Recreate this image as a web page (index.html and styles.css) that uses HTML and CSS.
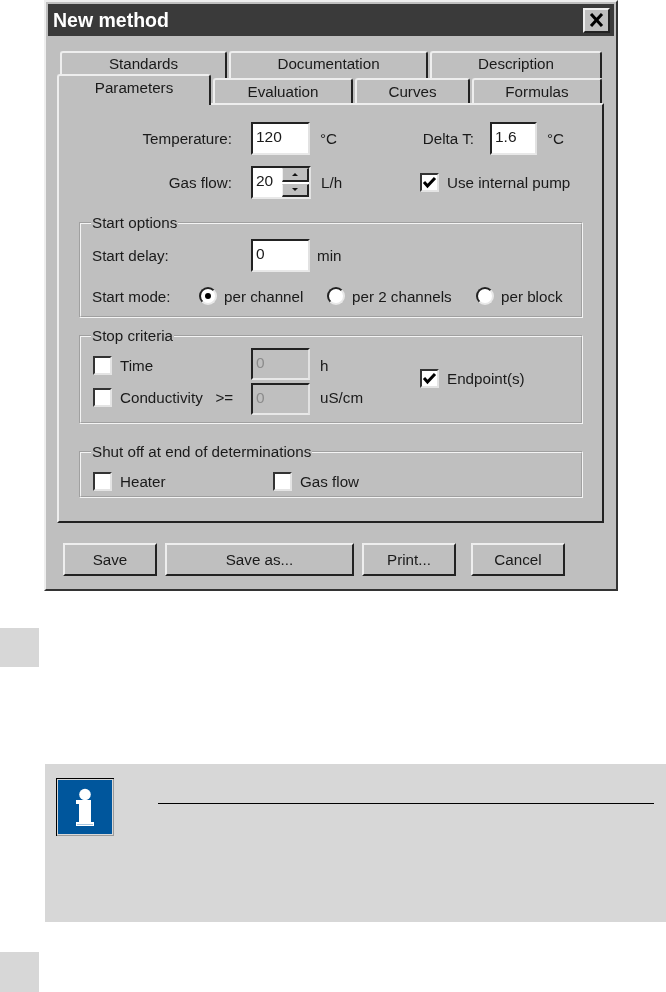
FILE: index.html
```html
<!DOCTYPE html>
<html lang="en">
<head>
  <meta charset="UTF-8">
  <meta name="viewport" content="width=device-width, initial-scale=1.0">
  <title>New method</title>
  <link rel="stylesheet" href="styles.css">
</head>
<body>
  <div class="dialog">
    <div class="title-bar">
      <span class="title-text">New method</span>
      <button type="button" class="close-btn">
        <svg width="15" height="14" viewBox="0 0 15 14"><path d="M2 1l11 12M13 1L2 13" stroke="#000" stroke-width="3" fill="none"/></svg>
      </button>
    </div>

    <div class="tabs">
      <div class="tab-row back-row">
        <div class="tab tab-standards">Standards</div>
        <div class="tab tab-documentation">Documentation</div>
        <div class="tab tab-description">Description</div>
      </div>
      <div class="tab-row front-row">
        <div class="tab tab-parameters active">Parameters</div>
        <div class="tab tab-evaluation">Evaluation</div>
        <div class="tab tab-curves">Curves</div>
        <div class="tab tab-formulas">Formulas</div>
      </div>
    </div>

    <div class="panel">
      <div class="row top-row">
        <span class="label-right temp-label">Temperature:</span>
        <div class="field field-wide">120</div>
        <span class="unit unit-temp">°C</span>
        <span class="label-right delta-label">Delta T:</span>
        <div class="field field-narrow">1.6</div>
        <span class="unit unit-delta">°C</span>
      </div>
      <div class="row top-row second">
        <span class="label-right temp-label">Gas flow:</span>
        <div class="field spinner">
          <span class="spin-value">20</span>
          <div class="spin-btns">
            <span class="spin-btn"><i class="arrow up"></i></span>
            <span class="spin-btn"><i class="arrow down"></i></span>
          </div>
        </div>
        <span class="unit unit-flow">L/h</span>
        <label class="check"><span class="box"><svg width="15" height="15" viewBox="0 0 15 15"><path d="M2 7l3.5 4L13 3" stroke="#000" stroke-width="3" fill="none"/></svg></span>Use internal pump</label>
      </div>

      <fieldset class="group group-start">
        <legend>Start options</legend>
        <div class="row">
          <span class="col-label">Start delay:</span>
          <div class="field field-wide">0</div>
          <span class="unit unit-min">min</span>
        </div>
        <div class="row mode-row">
          <span class="mode-label">Start mode:</span>
          <label class="radio radio-channel"><span class="dot selected"></span>per channel</label>
          <label class="radio radio-two"><span class="dot"></span>per 2 channels</label>
          <label class="radio"><span class="dot"></span>per block</label>
        </div>
      </fieldset>

      <fieldset class="group group-stop">
        <legend>Stop criteria</legend>
        <div class="stop-grid">
          <label class="check">
            <span class="box"></span>Time
          </label>
          <div class="field field-wide disabled">0</div>
          <span class="unit stop-unit">h</span>
          <label class="check cond-check">
            <span class="box"></span>Conductivity &nbsp;&nbsp;&gt;=
          </label>
          <div class="field field-wide disabled">0</div>
          <span class="unit stop-unit cond-unit">uS/cm</span>
          <label class="check check-endpoint"><span class="box"><svg width="15" height="15" viewBox="0 0 15 15"><path d="M2 7l3.5 4L13 3" stroke="#000" stroke-width="3" fill="none"/></svg></span>Endpoint(s)</label>
        </div>
      </fieldset>

      <fieldset class="group group-shut">
        <legend>Shut off at end of determinations</legend>
        <div class="row">
          <label class="check check-heater"><span class="box"></span>Heater</label>
          <label class="check"><span class="box"></span>Gas flow</label>
        </div>
      </fieldset>
    </div>

    <div class="buttons">
      <button type="button" class="btn btn-save">Save</button>
      <button type="button" class="btn btn-saveas">Save as...</button>
      <button type="button" class="btn btn-print">Print...</button>
      <button type="button" class="btn btn-cancel">Cancel</button>
    </div>
  </div>

  <div class="step-marker first"></div>

  <div class="note">
    <svg class="note-icon" width="58" height="58" viewBox="0 0 58 58">
      <rect width="58" height="58" fill="#000"/>
      <rect x="1" y="1" width="57" height="57" fill="#9a9a9a"/>
      <rect x="1" y="1" width="56" height="56" fill="#d8d8d8"/>
      <rect x="2" y="2" width="54" height="54" fill="#00569c"/>
      <circle cx="29" cy="16.5" r="5.8" fill="#fff"/>
      <path d="M20 22h15v22h3v4H20v-4h3V26h-3z" fill="#fff"/>
      <path d="M21 46.5h16" stroke="#a6c6e0" fill="none"/>
    </svg>
    <div class="note-rule"></div>
  </div>

  <div class="step-marker last"></div>
</body>
</html>
```

FILE: styles.css
```css
/* General Reset */
* {
  margin: 0;
  padding: 0;
  box-sizing: border-box;
}

html, body {
  height: 992px;
  overflow: hidden;
}

body {
  background: #fff;
  font-family: 'Liberation Sans', Arial, sans-serif;
}

/* Dialog window */
.dialog {
  width: 574px;
  height: 591px;
  margin-left: 44px;
  padding: 2px;
  background: #bfbfbf;
  border: 2px solid;
  border-color: #eee #333 #333 #eee;
  color: #1a1a1a;
  font-size: 15.2px;
  filter: blur(0.45px);
}

.title-bar {
  display: flex;
  justify-content: space-between;
  align-items: center;
  height: 32px;
  padding: 0 4px 0 5px;
  background: #3a3a3a;
  color: #fff;
}

.title-text {
  font-size: 19.5px;
  font-weight: bold;
}

.close-btn {
  display: flex;
  justify-content: center;
  align-items: center;
  width: 27px;
  height: 25px;
  background: #bfbfbf;
  border: 2px solid;
  border-color: #eee #222 #222 #eee;
}

/* Tabs */
.tabs {
  position: relative;
  z-index: 1;
  margin: 15px 0 -2px 9px;
}

.tab-row {
  display: flex;
  gap: 2px;
}

.back-row {
  height: 27px;
  padding-left: 3px;
}

.front-row {
  height: 31px;
  margin-top: -4px;
  align-items: flex-start;
}

.tab {
  height: 25px;
  margin-top: 4px;
  padding-top: 3px;
  text-align: center;
  background: #bfbfbf;
  border: 2px solid;
  border-color: #eee #222 transparent #eee;
  border-bottom: 0;
  border-radius: 3px 3px 0 0;
}

.back-row .tab {
  height: 27px;
  margin-top: 0;
  padding-top: 2px;
}

.tab-standards { width: 167px; }
.tab-documentation { width: 199px; }
.tab-description { width: 172px; }
.tab-parameters { width: 154px; }
.tab-evaluation { width: 140px; }
.tab-curves { width: 115px; }
.tab-formulas { width: 130px; }

.tab.active {
  height: 31px;
  margin-top: 0;
  padding-top: 3px;
}

/* Panel */
.panel {
  width: 547px;
  height: 420px;
  margin-left: 9px;
  padding: 17px 19px 0 20px;
  border: 2px solid;
  border-color: #eee #222 #222 #eee;
}

.row {
  display: flex;
  align-items: center;
}

.top-row {
  height: 33px;
}

.second {
  margin-top: 11px;
}

.label-right {
  flex-shrink: 0;
  text-align: right;
}

.temp-label {
  width: 153px;
  margin-right: 19px;
}

.delta-label {
  width: 56px;
  margin-left: 58px;
  margin-right: 16px;
}

.unit {
  white-space: nowrap;
}

.unit-temp {
  width: 40px;
  margin-left: 10px;
  flex-shrink: 0;
}

.unit-delta {
  margin-left: 10px;
}

.unit-flow {
  width: 99px;
  margin-left: 10px;
  flex-shrink: 0;
}

.unit-min {
  margin-left: 7px;
}

/* Sunken fields */
.field {
  height: 33px;
  padding: 0 0 3px 3px;
  display: flex;
  align-items: center;
  flex-shrink: 0;
  background: #fff;
  border: 2px solid;
  border-color: #222 #e2e2e2 #e8e8e8 #222;
  font-size: 15.5px;
}

.field-wide { width: 59px; }
.field-narrow { width: 47px; }

.field.disabled {
  align-self: start;
  height: 32px;
  background: #bfbfbf;
  color: #8c8c8c;
}

.spinner {
  width: 60px;
  padding: 0 0 0 3px;
  justify-content: space-between;
}

.spin-value {
  margin-bottom: 3px;
}

.spin-btns {
  display: flex;
  flex-direction: column;
  gap: 2px;
  width: 27px;
  height: 29px;
  background: #fff;
}

.spin-btn {
  flex: 1;
  display: flex;
  justify-content: center;
  align-items: center;
  background: #bfbfbf;
  border: 1px solid;
  border-color: #bfbfbf #222 #222 #eee;
  border-width: 1px 2px 2px 1px;
}

.arrow {
  width: 0;
  height: 0;
  border-left: 3px solid transparent;
  border-right: 3px solid transparent;
}

.arrow.up { border-bottom: 3px solid #111; }
.arrow.down { border-top: 3px solid #111; }

/* Checks and radios */
.check, .radio {
  display: flex;
  align-items: center;
  white-space: nowrap;
}

.box {
  display: flex;
  justify-content: center;
  align-items: center;
  width: 19px;
  height: 19px;
  margin-right: 8px;
  flex-shrink: 0;
  background: #fff;
  border: 2px solid;
  border-color: #333 #e4e4e4 #e4e4e4 #333;
}

.dot {
  display: flex;
  justify-content: center;
  align-items: center;
  width: 18px;
  height: 18px;
  margin-right: 7px;
  flex-shrink: 0;
  background: #fff;
  border: 2px solid;
  border-color: #222 #e8e8e8 #e8e8e8 #222;
  border-radius: 50%;
}

.dot.selected::after {
  content: "";
  width: 6px;
  height: 6px;
  border-radius: 50%;
  background: #000;
}

/* Group boxes */
.group {
  border: 2px groove #f4f4f4;
  padding: 7px 11px 9px 11px;
  margin-top: 15px;
}

.group legend {
  margin-left: -1px;
  padding: 0 1px;
  line-height: 18px;
}

.col-label {
  width: 159px;
  flex-shrink: 0;
}

.mode-row {
  height: 22px;
  margin-top: 13px;
}

.mode-label {
  width: 107px;
  flex-shrink: 0;
}

.radio-channel { width: 128px; }
.radio-two { width: 149px; }

.group-stop {
  margin-top: 9px;
  padding: 3px 11px 8px;
}

.stop-grid {
  display: grid;
  grid-template-columns: 158px 59px 110px auto;
  grid-template-rows: 35px 31px;
  align-items: center;
  margin-left: 1px;
}

.stop-unit {
  margin-left: 10px;
}

.cond-check {
  margin-bottom: 3px;
}

.cond-unit {
  margin-bottom: 3px;
}

.check-endpoint {
  grid-column: 4;
  grid-row: 1 / 3;
  margin-bottom: 5px;
}

.group-shut {
  margin-top: 19px;
  padding: 10px 11px 5px;
}

.group-shut .row {
  height: 20px;
  margin-left: 1px;
}

.check-heater {
  width: 180px;
}

/* Bottom buttons */
.buttons {
  display: flex;
  margin: 20px 0 0 15px;
}

.btn {
  height: 33px;
  background: #bfbfbf;
  color: #1a1a1a;
  font: inherit;
  border: 2px solid;
  border-color: #eee #222 #222 #eee;
}

.btn-save { width: 94px; margin-right: 8px; }
.btn-saveas { width: 189px; margin-right: 8px; }
.btn-print { width: 94px; margin-right: 15px; }
.btn-cancel { width: 94px; }

/* Manual page bits below the screenshot */
.step-marker {
  width: 39px;
  height: 40px;
  background: #d7d7d7;
}

.first {
  height: 39px;
  margin-top: 37px;
}

.last {
  margin-top: 30px;
}

.note {
  display: flex;
  height: 158px;
  margin: 97px 0 0 45px;
  padding: 14px 12px 0 11px;
  background: #d7d7d7;
}

.note-icon {
  flex-shrink: 0;
}

.note-rule {
  flex: 1;
  height: 1px;
  margin: 25px 0 0 44px;
  background: #000;
}
```
